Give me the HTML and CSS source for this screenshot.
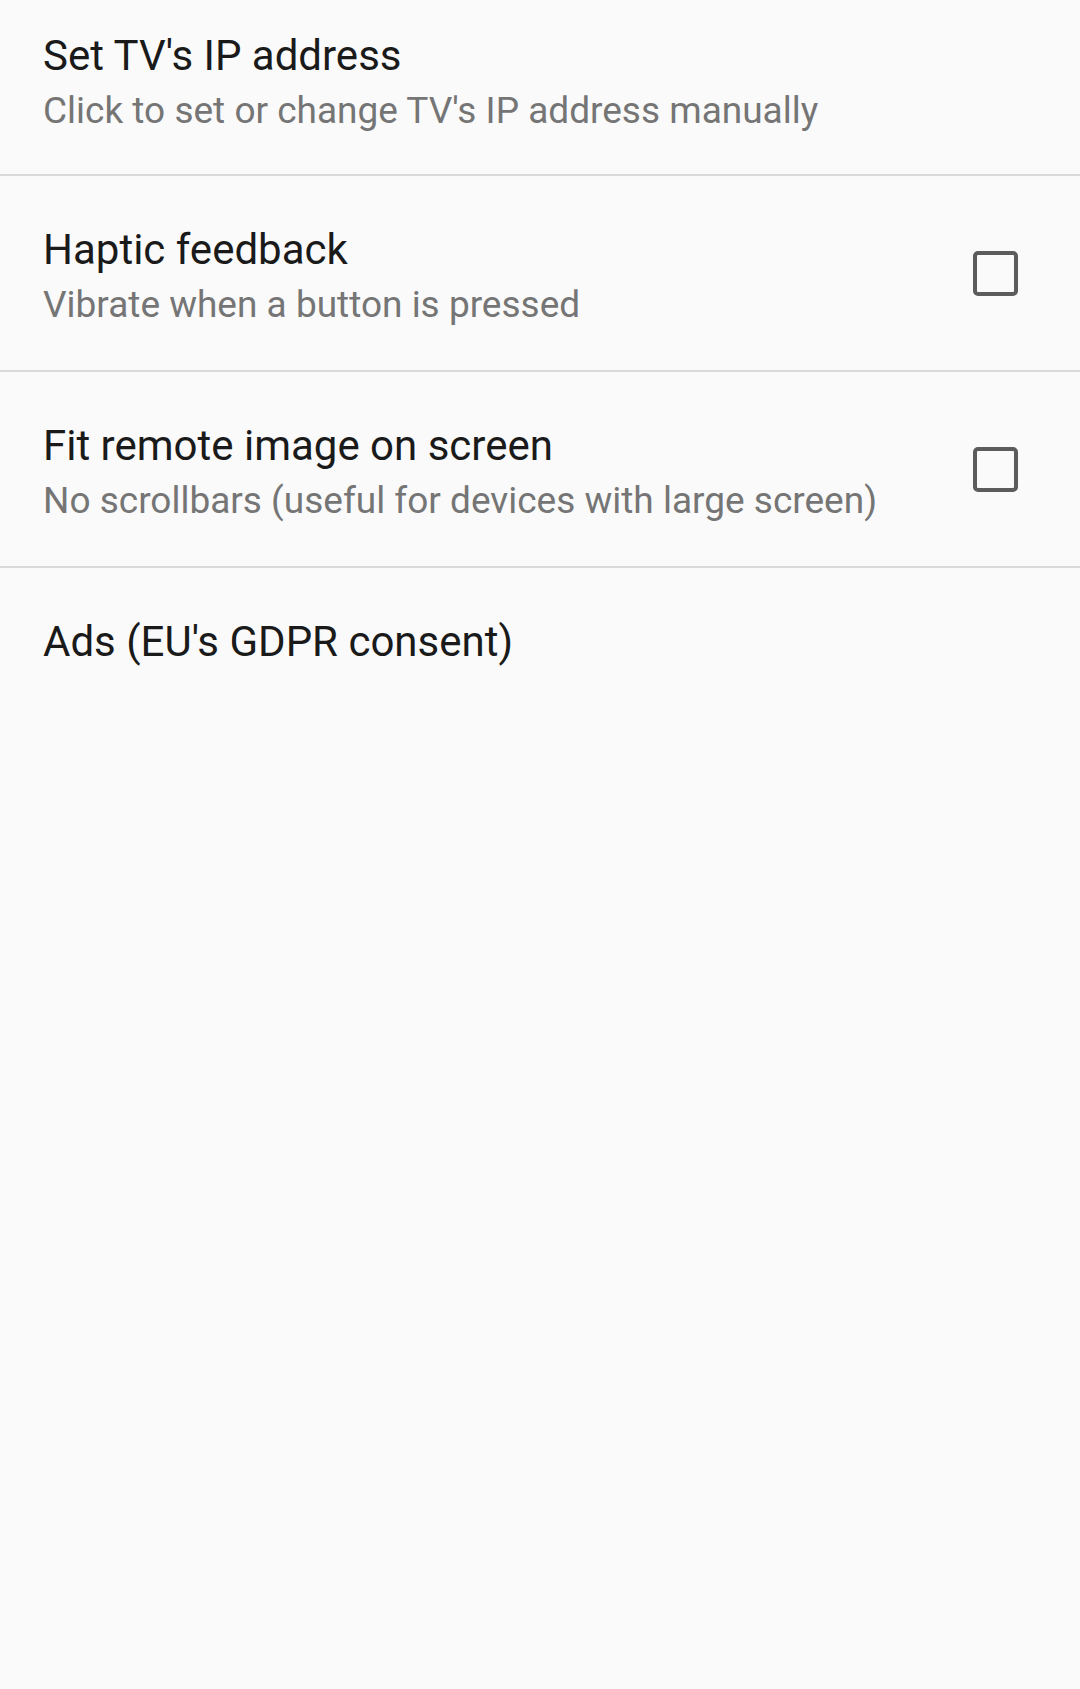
FILE: index.html
```html
<!DOCTYPE html>
<html>
<head>
<meta charset="utf-8">
<link rel="stylesheet" href="styles.css">
</head>
<body>
<div class="list">
  <div class="pref pref-first">
    <div class="text">
      <div class="title">Set TV's IP address</div>
      <div class="summary">Click to set or change TV's IP address manually</div>
    </div>
  </div>
  <div class="pref">
    <div class="text">
      <div class="title">Haptic feedback</div>
      <div class="summary">Vibrate when a button is pressed</div>
    </div>
    <div class="checkbox"></div>
  </div>
  <div class="pref">
    <div class="text">
      <div class="title">Fit remote image on screen</div>
      <div class="summary">No scrollbars (useful for devices with large screen)</div>
    </div>
    <div class="checkbox"></div>
  </div>
  <div class="pref pref-last">
    <div class="text">
      <div class="title">Ads (EU's GDPR consent)</div>
    </div>
  </div>
</div>
</body>
</html>
```
FILE: styles.css
```css
html, body {
  margin: 0;
  padding: 0;
  background: #fafafa;
}
body {
  width: 1080px;
  height: 1689px;
  overflow: hidden;
  font-family: Roboto, "Noto Sans", sans-serif;
}
.list {
  display: flex;
  flex-direction: column;
}
.pref {
  display: flex;
  align-items: flex-start;
  height: 194px;
  padding: 0 62px 0 43px;
  border-bottom: 2px solid #dadada;
}
.pref-first {
  height: 174px;
}
.pref-first .text {
  padding-top: 30px;
}
.pref-last {
  border-bottom: none;
}
.text {
  flex: 1;
  padding-top: 48px;
}
.title {
  font-size: 42px;
  line-height: 52px;
  color: #1a1a1a;
}
.summary {
  font-size: 37px;
  line-height: 52px;
  margin-top: 3px;
  color: #757575;
}
.checkbox {
  align-self: center;
  width: 45px;
  height: 45px;
  box-sizing: border-box;
  border: 4px solid #5c5c5c;
  border-radius: 5px;
}
```
